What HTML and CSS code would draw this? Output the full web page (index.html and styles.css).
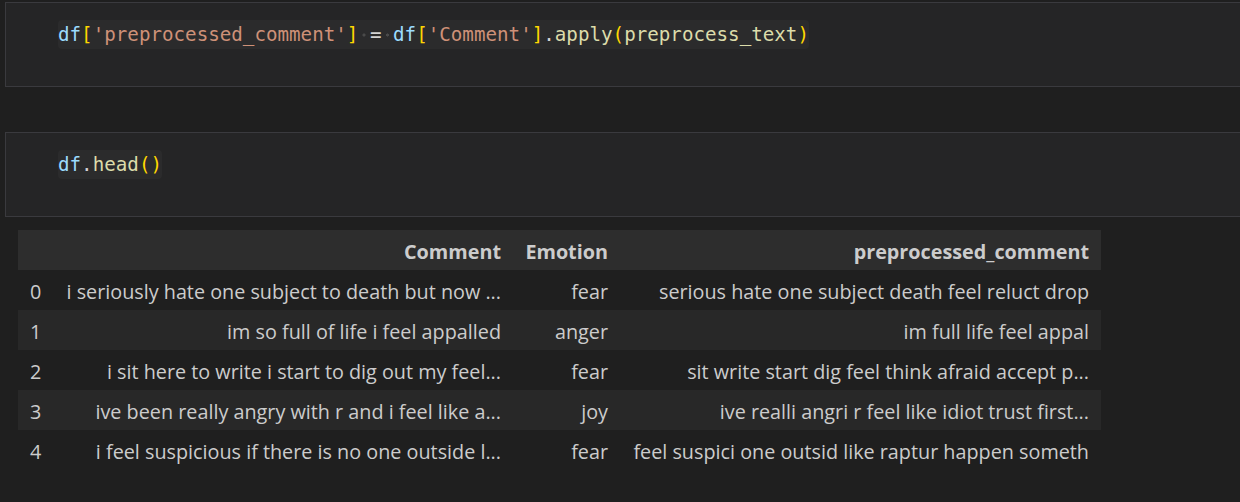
FILE: index.html
```html
<!DOCTYPE html>
<html>
<head>
<meta charset="utf-8">
<link rel="stylesheet" href="styles.css">
</head>
<body>
<div class="cell">
  <div class="code"><span class="var">df</span><span class="br">[</span><span class="str">'preprocessed_comment'</span><span class="br">]</span><span class="ws"> </span><span class="op">=</span><span class="ws"> </span><span class="var">df</span><span class="br">[</span><span class="str">'Comment'</span><span class="br">]</span><span class="op">.</span><span class="fn">apply</span><span class="br">(</span><span class="fn">preprocess_text</span><span class="br">)</span></div>
</div>
<div class="cell cell2">
  <div class="code"><span class="var">df</span><span class="op">.</span><span class="fn">head</span><span class="br">()</span></div>
</div>
<table class="df">
  <colgroup>
    <col class="c-idx"><col class="c-com"><col class="c-emo"><col class="c-pre">
  </colgroup>
  <thead>
    <tr><th></th><th>Comment</th><th>Emotion</th><th>preprocessed_comment</th></tr>
  </thead>
  <tbody>
    <tr><td class="idx">0</td><td>i seriously hate one subject to death but now ...</td><td>fear</td><td>serious hate one subject death feel reluct drop</td></tr>
    <tr><td class="idx">1</td><td>im so full of life i feel appalled</td><td>anger</td><td>im full life feel appal</td></tr>
    <tr><td class="idx">2</td><td>i sit here to write i start to dig out my feel...</td><td>fear</td><td>sit write start dig feel think afraid accept p...</td></tr>
    <tr><td class="idx">3</td><td>ive been really angry with r and i feel like a...</td><td>joy</td><td>ive realli angri r feel like idiot trust first...</td></tr>
    <tr><td class="idx">4</td><td>i feel suspicious if there is no one outside l...</td><td>fear</td><td>feel suspici one outsid like raptur happen someth</td></tr>
  </tbody>
</table>
</body>
</html>
```
FILE: styles.css
```css
html, body {
  margin: 0;
  padding: 0;
  background: #1f1f1f;
  overflow: hidden;
}
body {
  padding-top: 2px;
  width: 1240px;
  height: 502px;
}
.cell {
  margin-left: 5px;
  margin-right: -30px;
  height: 83px;
  background: #252526;
  border: 1px solid #3a3a3e;
  box-sizing: content-box;
  padding: 0;
}
.cell2 {
  margin-top: 45px;
}
.code {
  display: inline-block;
  margin-top: 17px;
  margin-left: 52px;
  height: 29px;
  line-height: 30px;
  background: #2b2b2c;
  border-radius: 4px;
  font-family: "DejaVu Sans Mono", "Liberation Mono", monospace;
  font-size: 19.2px;
  color: #d4d4d4;
  white-space: pre;
}
.var { color: #9cdcfe; }
.br { color: #ffd700; }
.str { color: #ce9178; }
.op { color: #d4d4d4; }
.fn { color: #dcdcaa; }
.ws {
  display: inline-block;
  width: 1ch;
  background: radial-gradient(circle at 50% 50%, #4a4a4a 1.3px, transparent 1.8px);
}
.df {
  margin-top: 13px;
  margin-left: 18px;
  border-collapse: collapse;
  table-layout: fixed;
  width: 1083px;
  font-family: "Open Sans", "Noto Sans", sans-serif;
  font-size: 19.8px;
  color: #cccccc;
}
.c-idx { width: 35px; }
.c-com { width: 460px; }
.c-emo { width: 107px; }
.c-pre { width: 481px; }
.df th, .df td {
  height: 40px;
  padding: 3px 12px 0;
  text-align: right;
  white-space: nowrap;
  box-sizing: border-box;
}
.df th {
  font-weight: 700;
  background: #2d2d2d;
}
.df td.idx {
  text-align: left;
}
.df tbody tr:nth-child(even) {
  background: #282828;
}
```
